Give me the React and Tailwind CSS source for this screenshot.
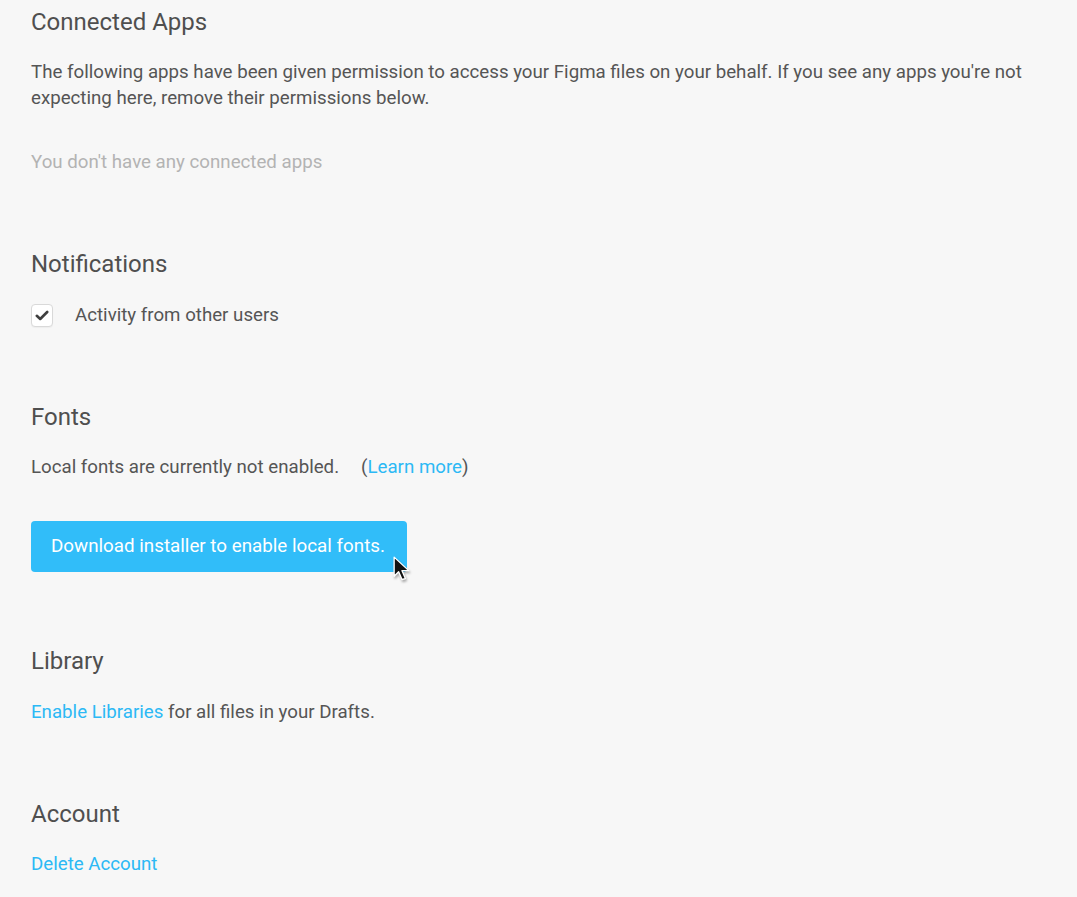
export default function App() {
  return (
    <div className="min-h-screen w-full bg-[#f7f7f7] px-[31px] pt-[8px] pb-10 text-[#555555] font-['Roboto',sans-serif]">
      {/* Connected Apps */}
      <section>
        <h2 className="text-[24px] leading-[28px] text-[#4f4f4f]">Connected Apps</h2>
        <p className="mt-[23px] text-[18.7px] leading-[26px] pr-[20px]">
          The following apps have been given permission to access your Figma files on your behalf. If you see any apps you're not expecting here, remove their permissions below.
        </p>
        <p className="mt-[38px] text-[18.7px] leading-[26px] text-[#b3b3b3]">You don't have any connected apps</p>
      </section>

      {/* Notifications */}
      <section className="mt-[75px]">
        <h2 className="text-[24px] leading-[28px] text-[#4f4f4f]">Notifications</h2>
        <label className="mt-[24px] flex items-center gap-[22px] text-[18.7px] leading-[26px]">
          <span className="w-[22px] h-[23px] rounded-[4px] border border-[#d9d9d9] bg-white flex items-center justify-center shadow-[0_1px_1px_rgba(0,0,0,0.04)]">
            <svg width="14" height="11" viewBox="0 0 14 11" fill="none">
              <path d="M1.8 5.8 5.2 9 12.2 2" stroke="#3f3f3f" strokeWidth="2.6" strokeLinecap="round" strokeLinejoin="round" />
            </svg>
          </span>
          Activity from other users
        </label>
      </section>

      {/* Fonts */}
      <section className="mt-[75px]">
        <h2 className="text-[24px] leading-[28px] text-[#4f4f4f]">Fonts</h2>
        <p className="mt-[23px] text-[18.7px] leading-[26px]">
          Local fonts are currently not enabled.
          <span className="ml-[22px]">(<a href="#" className="text-[#2cb9f5]">Learn more</a>)</span>
        </p>
        <div className="relative mt-[41px] inline-block">
          <button className="h-[51px] w-[376px] rounded-[4px] bg-[#31bdf9] text-white text-[18.8px] text-left pl-[20px]">
            Download installer to enable local fonts.
          </button>
          {/* mouse cursor */}
          <svg className="absolute left-[362px] top-[35px] drop-shadow-[1px_2px_1px_rgba(0,0,0,0.3)]" width="18" height="27" viewBox="0 0 16 24">
            <path d="M1 1 L1 18 L5 14 L8 21 L11 20 L8 13 L14 13 Z" fill="#111" stroke="#fff" strokeWidth="1.2" strokeLinejoin="round" />
          </svg>
        </div>
      </section>

      {/* Library */}
      <section className="mt-[75px]">
        <h2 className="text-[24px] leading-[28px] text-[#4f4f4f]">Library</h2>
        <p className="mt-[24px] text-[18.7px] leading-[26px]">
          <a href="#" className="text-[#2cb9f5]">Enable Libraries</a> for all files in your Drafts.
        </p>
      </section>

      {/* Account */}
      <section className="mt-[75px]">
        <h2 className="text-[24px] leading-[28px] text-[#4f4f4f]">Account</h2>
        <p className="mt-[23px] text-[18.7px] leading-[26px]">
          <a href="#" className="text-[#2cb9f5]">Delete Account</a>
        </p>
      </section>
    </div>
  );
}
